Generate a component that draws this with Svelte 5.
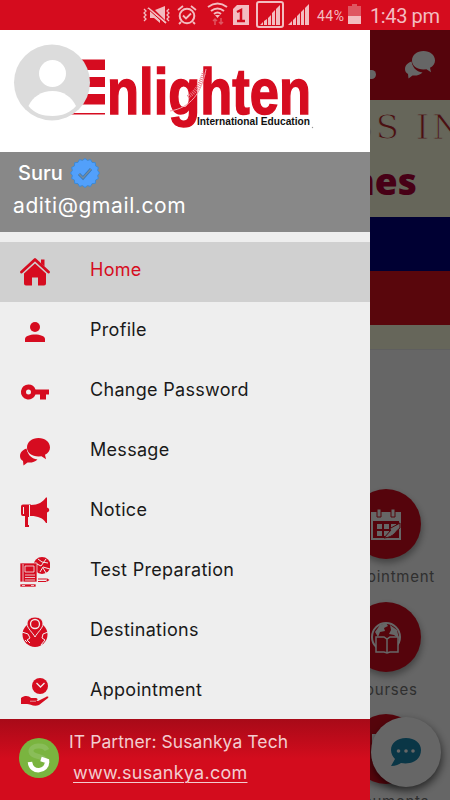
<script>
    const menuItems = [
        { icon: "home", label: "Home" },
        { icon: "profile", label: "Profile" },
        { icon: "key", label: "Change Password" },
        { icon: "message", label: "Message" },
        { icon: "notice", label: "Notice" },
        { icon: "test", label: "Test Preparation" },
        { icon: "globe", label: "Destinations" },
        { icon: "appointment", label: "Appointment" },
    ];
    let selected = "Home";

    // Scalloped outline of the verified badge
    const badge = Array.from({ length: 32 }, (_, i) => {
        const r = i % 2 ? 12.8 : 14.5;
        const a = (i * Math.PI) / 16;
        return `${(r * Math.sin(a)).toFixed(1)},${(-r * Math.cos(a)).toFixed(1)}`;
    }).join(" ");
</script>

{#snippet chat()}
    <path d="M9 11C3 12 0 15 0 19c0 2 1 4 3 5l.5 4.500 4-3c4 .5 8-.8 10-3C11 21.500 7 17 7 11z" />
    <path d="M18.500 1C12 1 7 5 7 10.500S12 19.500 18.500 19.500l3-.3 4.500 3-1-4.500c3-1.500 5-4 5-7.200C30 5 25 1 18.500 1z" class="bubble" />
{/snippet}

<div class="screen">
    <div class="statusbar">
        <svg width="320" height="30" viewBox="0 0 320 30">
            <g fill="none" stroke="#f3bcc0" stroke-width="1.300">
                <path d="M14 9l2 2-2 2 2 2-2 2 2 2-2 2M39 9l-2 2 2 2-2 2 2 2-2 2 2 2" />
                <path d="M18 8l18 15" stroke-width="2" />
                <circle cx="57" cy="16" r="7.300" stroke-width="2" />
                <path d="M53 15.500l3 3 5-5M48 10l5-4M66 10l-5-4M51 22l-2 2M63 22l2 2" stroke-width="1.800" />
                <path d="M78 7q9.500-7 19 0M81 11q6.500-5 13 0M84 14q3.500-3 7 0" stroke-width="2" />
                <rect x="127" y="2" width="26" height="25" rx="2" stroke-width="2" />
            </g>
            <g fill="#f3bcc0">
                <path d="M20 10l10 10v3l-6-5h-4zM25 10l10-4v14zM85 15h5l-2.500 3zM103 9l4-4h12v20h-16z" />
                <path d="M130 25l3-3v3zM134 25v-4l3-2v6zM138 25v-7l3-3v10zM142 25V13l3-3v15zM146 25V9l4-4v20z" />
                <path d="M158 25l4-4v4zM163 25v-5l3-3v8zM167 25v-9l3-3v12zM171 25V12l3-3v16zM175 25V8l4-4v21z" />
                <path d="M218 16h13v8h-13z" />
            </g>
            <path d="M218 6h4V4h5v2h4v10h-13z" fill="#df5661" />
            <path d="M18 9l17 15" fill="none" stroke="#d30c1d" />
            <path d="M85 19v6M83 21l2-2 2 2M91 18v6M89 22l2 2 2-2" fill="none" stroke="#df5661" stroke-width="1.500" />
            <path d="M107 12l4-2v11M107 21h8" fill="none" stroke="#d30c1d" stroke-width="2.500" />
            <text x="187" y="21" font-size="14" textLength="27">44%</text>
            <text x="240" y="23" font-size="20" textLength="70">1:43 pm</text>
        </svg>
    </div>

    <div class="page">
        <div class="toolbar">
            <i class="bell"></i>
            <svg class="chat-light" width="31" height="30" viewBox="0 0 31 30" fill="#fff">{@render chat()}</svg>
        </div>
        <div class="banner">
            <div class="slogan">SS IN</div>
            <div class="times">nes</div>
            <div class="stripe blue"></div>
            <div class="stripe red"></div>
        </div>
        <div class="shortcuts">
            <div class="shortcut">
                <div class="round">
                    <svg width="32" height="34" viewBox="0 0 32 34">
                        <path d="M2 6h28v26H2z" fill="none" stroke="#fff" stroke-width="2" />
                        <path d="M2 6h28v8H2z" fill="#fff" />
                        <path d="M7 2h4v8H7zM21 2h4v8h-4z" fill="#fff" stroke="#d30c1d" />
                        <path d="M7 17h5v5H7zM14 17h5v5h-5zM21 17h5v5h-5zM7 24h5v5H7zM14 24h5v5h-5z" fill="#fff" />
                        <path d="M14 31l7-8-2-1 11-6v5c-5 3-5 9-16 10z" fill="#fff" stroke="#d30c1d" />
                    </svg>
                </div>
                <span>Appointment</span>
            </div>
            <div class="shortcut">
                <div class="round">
                    <svg width="32" height="34" viewBox="0 0 32 34">
                        <circle cx="16" cy="17" r="14" fill="none" stroke="#fff" stroke-width="2" />
                        <path d="M5 12l5-7 6-2 2 3-4 2 1 3-5 1-2 5zM20 5l7 5 2 9-5-4-5-1 2-4z" fill="#fff" />
                        <path d="M6 17h8l3 2 3-2h8v15h-8l-3 1-3-1H6zM17 19v14" fill="#d30c1d" stroke="#fff" stroke-width="1.500" />
                    </svg>
                </div>
                <span>Courses</span>
            </div>
            <div class="shortcut">
                <div class="round">
                    <svg width="32" height="34" viewBox="0 0 32 34">
                        <path d="M2 2h18v5H6v22H2z" fill="#fff" />
                    </svg>
                </div>
                <span>Documents</span>
            </div>
        </div>
        <div class="fab">
            <svg width="32" height="30" viewBox="0 0 32 30">
                <path d="M16 1C7 1 1 6 1 13c0 4 2 7 4 9L1 29c5 0 8-2 10-3 12 2 20-4 20-13C31 6 25 1 16 1z" fill="#1987b0" />
                <g fill="#fff">
                    <circle cx="8.500" cy="14" r="1.800" />
                    <circle cx="16" cy="14" r="1.800" />
                    <circle cx="23" cy="14" r="1.800" />
                </g>
            </svg>
        </div>
    </div>
    <div class="scrim"></div>

    <div class="drawer">
        <div class="brand">
            <svg width="370" height="121" viewBox="0 0 370 121">
                <g fill="#d60c20">
                    <path d="M70 29.500h35V40H70zM70 47h35v10H70zM70 64h35v10.500H70zM70 84.500h35V83H70z" />
                    <text class="logo" x="107" y="84" font-size="64" textLength="204" lengthAdjust="spacingAndGlyphs">nlighten</text>
                </g>
                <path d="M170 81c20-3 32-18 36-42" fill="none" stroke="#f4a3ac" stroke-width="1" />
                <path d="M188 67c8-5 13-14 16-25" fill="none" stroke="#eb7683" stroke-width="4" stroke-dasharray="1 1" />
                <text class="tagline" x="197" y="94.500" font-size="10" textLength="113" lengthAdjust="spacingAndGlyphs">International Education</text>
                <circle cx="312.500" cy="97.500" r=".7" fill="#999" />
                <circle cx="52" cy="52.500" r="38" fill="#dcdcdc" />
                <circle cx="52.500" cy="43.500" r="13.500" fill="#fff" />
                <path d="M28.500 76c4-9 13-15 24-15s19 6 23.500 15C71 82 63 86 52.500 86S34 83 28.500 76z" fill="#fff" />
            </svg>
        </div>
        <div class="account">
            <div class="name">
                <span>Suru</span>
                <svg width="30" height="30" viewBox="-15 -15 30 30">
                    <polygon points={badge} fill="#52a0fb" stroke="#3b8ad8" />
                    <path d="M-6 1l4 4 8-9" fill="none" stroke="#3979b7" stroke-width="3" />
                    <path d="M-6 1l4 4 8-9" fill="none" stroke="#758b9f" stroke-width="1.500" />
                </svg>
            </div>
            <div class="email">aditi@gmail.com</div>
        </div>
        <ul class="menu">
            {#each menuItems as item}
                <li class:active={item.label === selected}>
                    <svg width="30" height="30" viewBox="0 0 30 30" fill="#d60c20">
                        {#if item.icon === "home"}
                            <path d="M1.500 15L15 2.500 28.500 15" fill="none" stroke="#d60c20" stroke-width="2.800" stroke-linecap="round" stroke-linejoin="round" />
                            <path d="M21 2.500h3.500v7L21 6.500zM15 6.500l11 10v10q0 2-2 2h-6v-8h-6v8H6q-2 0-2-2v-10z" />
                        {:else if item.icon === "profile"}
                            <circle cx="15" cy="10" r="5" />
                            <path d="M5 25v-3c0-3 5-4.500 10-4.500s10 1.500 10 4.500v3z" />
                        {:else if item.icon === "key"}
                            <path d="M8.500 7.500a7.500 7.500 0 1 0 7 10H20v5h6v-5h3v-5H15.500a7.500 7.500 0 0 0-7-5zm0 5a2.500 2.500 0 1 1 0 5 2.500 2.500 0 0 1 0-5z" fill-rule="evenodd" />
                        {:else if item.icon === "message"}
                            {@render chat()}
                        {:else if item.icon === "notice"}
                            <path d="M9 7.500h2V19H9v11H5V19H3q-2 0-2-2V9.500q0-2 2-2zM11 8c7 0 12-3 15-7.500h1v10c3 1 3 4 0 5v10.500h-1c-3-5-8-7-15-7z" />
                            <path d="M3.500 10v7M9.500 8v11M8.500 20v8" stroke="#eee" fill="none" />
                        {:else if item.icon === "test"}
                            <circle cx="22" cy="8.500" r="8.500" />
                            <path d="M15 6l6 3 5-7M20 15l3-5 7 2M18 2l4 3 6 1M26 16l-3-5" stroke="#eee" fill="none" />
                            <path d="M0 6h17v19H0zM0 27h16v3H0z" stroke="#eee" stroke-width=".7" />
                            <path d="M3 7v18M5 18h10M5 20.500h10M5 23h10M5 9h9v6H5zM2 28.500h3M11 28.500h3" stroke="#eee" fill="none" stroke-width=".8" />
                            <path d="M18 21.500h8v1h-8zM18 24h8v1h-8zM26.500 21l3 2-3 2z" />
                        {:else if item.icon === "globe"}
                            <circle cx="15" cy="17.500" r="12.500" />
                            <path d="M2 15l6 2 2 4-3 2 3 3M28 15l-5 2-1 4 3 2-4 5M5 23l2 2" stroke="#eee" fill="none" />
                            <path d="M15 0C9 0 7 4 7 7c0 4 6 9 8 13 2-4 8-9 8-13 0-3-2-7-8-7z" stroke="#eee" />
                            <circle cx="15" cy="7" r="4.500" fill="none" stroke="#eee" stroke-width="1.300" />
                        {:else}
                            <circle cx="20" cy="9" r="8" />
                            <path d="M16.500 6l4 4 4-4" fill="none" stroke="#eee" stroke-width="1.300" />
                            <path d="M1 21c4-3 8-2 10 0h5c2 0 2 3 0 3h-4 6l8-4c2-1 3 0 2 1l-9 7c-5 2-9-1-12-1H1z" />
                            <path d="M10 24.200h6" stroke="#eee" stroke-width=".6" />
                        {/if}
                    </svg>
                    <span>{item.label}</span>
                </li>
            {/each}
        </ul>
        <div class="partner">
            <svg width="42" height="42" viewBox="0 0 42 42">
                <circle cx="21" cy="21" r="20" fill="#7ab43f" />
                <path d="M29 13c-3-6-16-5-16 1 0 7 14 4 14 10" fill="none" stroke="#8abd59" stroke-width="5" />
                <path d="M12 25c1 12 18 10 17-1l-6-2" fill="none" stroke="#fff" stroke-width="4.500" />
            </svg>
            <div class="partner-text">
                <span class="by">IT Partner: Susankya Tech</span>
                <span class="link">www.susankya.com</span>
            </div>
        </div>
    </div>
</div>

<style>
    .screen {
        position: relative;
        width: 450px;
        height: 800px;
        overflow: hidden;
        background: #fff;
        font-family: Inter, "Open Sans", sans-serif;
    }
    .screen svg {
        display: block;
        flex: none;
    }
    .bubble {
        stroke: #eee;
        stroke-width: 1;
        paint-order: stroke;
    }
    .chat-light .bubble {
        stroke: #d50c1e;
    }
    .statusbar {
        height: 30px;
        padding-left: 130px;
        background: #d50c1e;
    }
    .statusbar text {
        fill: #f3bcc0;
        font-family: Roboto, sans-serif;
    }
    .toolbar {
        display: flex;
        align-items: center;
        justify-content: flex-end;
        gap: 29px;
        height: 70px;
        padding-right: 14px;
        box-sizing: border-box;
        background: #d50c1e;
    }
    .bell {
        width: 10px;
        height: 9px;
        margin-top: 18px;
        border-radius: 5px;
        background: #fff;
    }
    .banner {
        height: 250px;
        overflow: hidden;
        background: #ffffe1;
        border-bottom: 1px solid #eee;
        box-sizing: border-box;
    }
    .slogan {
        height: 55px;
        padding: 8px 0 0 350px;
        box-sizing: border-box;
        color: #b9262c;
        font: 34px/38px "DejaVu Serif", serif;
        letter-spacing: 3px;
        white-space: nowrap;
        -webkit-text-stroke: 1px #ffffe1;
    }
    .times {
        height: 62px;
        padding-left: 350px;
        color: #b10037;
        font: 800 37px/52px "Open Sans", sans-serif;
    }
    .stripe {
        height: 54px;
    }
    .blue {
        background: #000080;
    }
    .red {
        background: #de1020;
    }
    .shortcuts {
        display: flex;
        flex-direction: column;
        align-items: flex-end;
        padding-top: 139px;
    }
    .shortcut {
        display: flex;
        flex-direction: column;
        align-items: center;
        width: 129px;
        height: 112.500px;
        flex: none;
    }
    .round {
        display: flex;
        align-items: center;
        justify-content: center;
        width: 70px;
        height: 70px;
        border-radius: 50%;
        background: #d50c1e;
        box-shadow: 1px 4px 7px rgba(0, 0, 0, 0.35);
    }
    .shortcut span {
        margin-top: 7px;
        color: #777;
        font-size: 15px;
        line-height: 22px;
        letter-spacing: 0.75px;
    }
    .fab {
        position: absolute;
        right: 9px;
        bottom: 13px;
        display: flex;
        align-items: center;
        justify-content: center;
        width: 70px;
        height: 70px;
        border-radius: 50%;
        background: #fff;
        box-shadow: 1px 4px 8px rgba(0, 0, 0, 0.6);
    }
    .scrim {
        position: absolute;
        inset: 30px 0 0;
        background: rgba(0, 0, 0, 0.6);
    }
    .drawer {
        position: absolute;
        top: 30px;
        left: 0;
        display: flex;
        flex-direction: column;
        width: 370px;
        height: 770px;
        background: #eee;
    }
    .brand {
        flex: none;
        height: 122px;
        background: #fff;
    }
    .logo {
        stroke: #d60c20;
        stroke-width: 1.5;
        font-family: "Liberation Sans", sans-serif;
        font-weight: bold;
    }
    .tagline {
        fill: #111;
        font-family: "Liberation Sans", sans-serif;
        font-weight: bold;
    }
    .account {
        flex: none;
        height: 80px;
        background: #888;
        color: #fff;
    }
    .name {
        display: flex;
        align-items: center;
        gap: 7px;
        height: 42px;
        padding-left: 18px;
        font-size: 20px;
        font-weight: 500;
    }
    .email {
        padding-left: 13px;
        font-size: 21px;
        line-height: 24px;
        letter-spacing: 0.6px;
    }
    .menu {
        flex: 1;
        min-height: 0;
        margin: 0;
        padding: 10px 0 0;
        overflow: hidden;
        list-style: none;
    }
    .menu li {
        display: flex;
        align-items: center;
        gap: 40px;
        height: 60px;
        padding-left: 20px;
        color: #191919;
        font-size: 18px;
        letter-spacing: 0.3px;
    }
    .menu span {
        margin-top: -5px;
    }
    .menu .active {
        background: #d0d0d0;
        color: #d60c20;
    }
    .partner {
        display: flex;
        flex: none;
        gap: 9px;
        height: 81px;
        padding-left: 18px;
        box-sizing: border-box;
        background: linear-gradient(#a80a18, #d30c1d 40px);
        color: #f3cdd0;
    }
    .partner > svg {
        margin-top: 18px;
    }
    .partner-text {
        display: flex;
        flex-direction: column;
        align-items: flex-start;
        font-size: 17.500px;
    }
    .by {
        margin-top: 12px;
        line-height: 22px;
        letter-spacing: 0.08px;
    }
    .link {
        margin: 9px 0 0 4px;
        font-size: 18px;
        line-height: 22px;
        letter-spacing: 0.25px;
        text-decoration: underline;
        text-decoration-thickness: 1px;
        text-underline-offset: 3px;
    }
</style>
